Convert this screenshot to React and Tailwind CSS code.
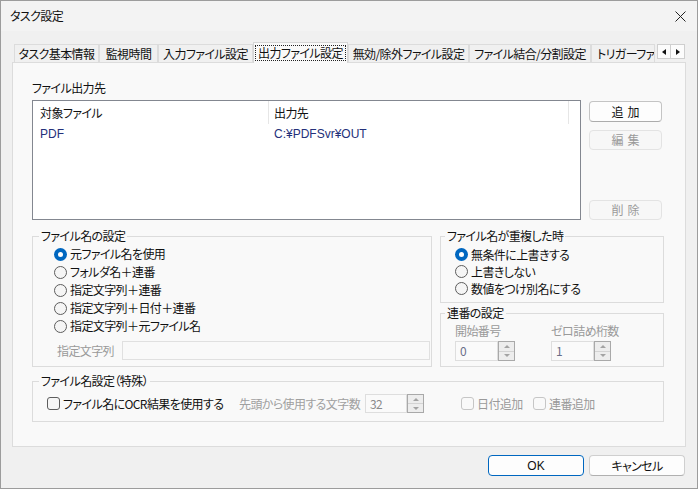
import React from "react";

function Radio({ checked, label, rowClass }) {
  return (
    <div className={"flex items-center " + rowClass}>
      {checked ? (
        <span className="w-[13px] h-[13px] rounded-full bg-[#0067c0] flex items-center justify-center shrink-0">
          <span className="w-[5px] h-[5px] rounded-full bg-white" />
        </span>
      ) : (
        <span className="w-[13px] h-[13px] rounded-full border border-[#5d5d5d] bg-[#f5f5f5] shrink-0" />
      )}
      <span className="ml-[3px] whitespace-nowrap">{label}</span>
    </div>
  );
}

function Check({ disabled }) {
  return (
    <span
      className={
        "w-[13px] h-[13px] rounded-[3px] border shrink-0 " +
        (disabled ? "border-[#c6c6c6] bg-[#f9f9f9]" : "border-[#5d5d5d] bg-[#f6f6f6]")
      }
    />
  );
}

function SpinButtons() {
  return (
    <div className="w-[17px] flex flex-col border border-[#a9a9a9] bg-[#ededed]">
      <div className="flex-1 flex items-center justify-center border-b border-[#d3d3d3]">
        <span className="w-0 h-0 border-l-[3px] border-r-[3px] border-b-[3px] border-l-transparent border-r-transparent border-b-[#a3a3a3]" />
      </div>
      <div className="flex-1 flex items-center justify-center">
        <span className="w-0 h-0 border-l-[3px] border-r-[3px] border-t-[3px] border-l-transparent border-r-transparent border-t-[#a3a3a3]" />
      </div>
    </div>
  );
}

function Spin({ value, widthClass }) {
  return (
    <div className={"flex h-[20px] " + widthClass}>
      <div className="flex-1 border border-[#dedede] bg-[#fafafa] pl-[4px] flex items-center text-[#6a6e88] leading-none">
        {value}
      </div>
      <SpinButtons />
    </div>
  );
}

function Tab({ label, widthClass, selected, left }) {
  if (selected) {
    return (
      <div
        className={
          "h-[21px] -mb-px border border-b-0 border-[#d6d6d6] bg-[#f9f9f9] flex items-center justify-center z-10 whitespace-nowrap " +
          widthClass
        }
      >
        <span className="border border-dotted border-[#222] px-[2px] leading-[14px] whitespace-nowrap">{label}</span>
      </div>
    );
  }
  return (
    <div
      className={
        "h-[18px] border border-b-0 border-[#dcdcdc] bg-[#f0f0f0] flex items-center overflow-hidden whitespace-nowrap " +
        (left ? "pl-[5px] " : "justify-center ") +
        widthClass
      }
    >
      {label}
    </div>
  );
}

export default function App() {
  return (
    <div className="w-[698px] h-[489px] border border-[#9c9c9c] bg-[#f0f0f0] flex flex-col text-[12px] tracking-[-0.6px] text-[#111] font-['Noto_Sans_CJK_JP',sans-serif] [font-feature-settings:'palt'] overflow-hidden">
      {/* Title bar */}
      <div className="h-[30px] bg-[#f3f3f3] flex items-center pl-[9px] pr-[11px] shrink-0">
        <span className="leading-[16px]">タスク設定</span>
        <svg className="ml-auto" width="11" height="11" viewBox="0 0 11 11">
          <path d="M0.5 0.5 L10.5 10.5 M10.5 0.5 L0.5 10.5" stroke="#222" strokeWidth="1" fill="none" />
        </svg>
      </div>

      {/* Tabs */}
      <div className="mt-[11px] ml-[13px] h-[20px] flex items-end leading-[16px] shrink-0">
        <Tab label="タスク基本情報" widthClass="w-[85px]" />
        <Tab label="監視時間" widthClass="w-[59px]" />
        <Tab label="入力ファイル設定" widthClass="w-[95px]" />
        <Tab label="出力ファイル設定" widthClass="w-[95px]" selected />
        <Tab label="無効/除外ファイル設定" widthClass="w-[121px]" />
        <Tab label="ファイル結合/分割設定" widthClass="w-[122px]" />
        <Tab label="トリガーファイル設定" widthClass="w-[64px]" left />
        <div className="self-start mt-[2px] ml-[2px] flex">
          <div className="w-[14px] h-[15px] border border-[#cfcfcf] bg-[#fcfcfc] flex items-center justify-center">
            <span className="w-0 h-0 border-t-[3px] border-b-[3px] border-r-[4px] border-t-transparent border-b-transparent border-r-[#111]" />
          </div>
          <div className="w-[14px] h-[15px] border border-l-0 border-[#cfcfcf] bg-[#fcfcfc] flex items-center justify-center">
            <span className="w-0 h-0 border-t-[3px] border-b-[3px] border-l-[4px] border-t-transparent border-b-transparent border-l-[#111]" />
          </div>
        </div>
      </div>

      {/* Panel */}
      <div className="ml-[11px] w-[674px] h-[385px] border border-[#dcdcdc] bg-[#f9f9f9] pl-[19px] pt-[17px] flex flex-col shrink-0 leading-[16px]">
        <div>ファイル出力先</div>

        {/* list + buttons */}
        <div className="mt-[4px] flex">
          <div className="w-[549px] h-[120px] border border-[#838790] bg-white flex flex-col">
            <div className="flex h-[24px] items-center">
              <div className="w-[235px] pl-[7px]">対象ファイル</div>
              <div className="w-px h-[23px] bg-[#e6e6e6] self-start" />
              <div className="w-[299px] pl-[5px]">出力先</div>
              <div className="w-px h-[23px] bg-[#e6e6e6] self-start" />
            </div>
            <div className="flex h-[18px] items-center text-[#24307a] tracking-normal font-['Liberation_Sans','Noto_Sans_CJK_JP',sans-serif]">
              <div className="w-[236px] pl-[7px]">PDF</div>
              <div className="pl-[5px]">C:¥PDFSvr¥OUT</div>
            </div>
          </div>
          <div className="ml-[8px] w-[73px] h-[120px] flex flex-col">
            <button className="mt-[1px] h-[21px] rounded-[4px] border border-[#c4c4c4] border-b-[#acacac] bg-[#fdfdfd] text-[#111] tracking-[4px] pl-[4px]">
              追加
            </button>
            <button className="mt-[8px] h-[20px] rounded-[4px] border border-[#e3e3e3] bg-[#f7f7f7] text-[#9a9a9a] tracking-[4px] pl-[4px]">
              編集
            </button>
            <button className="mt-auto h-[20px] rounded-[4px] border border-[#e3e3e3] bg-[#f7f7f7] text-[#9a9a9a] tracking-[4px] pl-[4px]">
              削除
            </button>
          </div>
        </div>

        {/* groups row */}
        <div className="mt-[8px] flex items-stretch">
          <fieldset className="w-[400px] border border-[#dcdcdc] pl-[21px] pt-[1px]">
            <legend className="-ml-[15px] px-[2px] leading-[16px]">ファイル名の設定</legend>
            <Radio checked label="元ファイル名を使用" rowClass="h-[18px]" />
            <Radio label="フォルダ名＋連番" rowClass="h-[18px]" />
            <Radio label="指定文字列＋連番" rowClass="h-[18px]" />
            <Radio label="指定文字列＋日付＋連番" rowClass="h-[18px]" />
            <Radio label="指定文字列＋元ファイル名" rowClass="h-[18px]" />
            <div className="mt-[6px] ml-[3px] flex items-center h-[19px]">
              <span className="w-[65px] text-[#9a9a9a]">指定文字列</span>
              <div className="w-[308px] h-[19px] border border-[#e0e0e0] bg-[#f9f9f9]" />
            </div>
          </fieldset>

          <div className="ml-[8px] w-[224px] flex flex-col">
            <fieldset className="border border-[#dcdcdc] pl-[14px] pt-[2px] pb-[5px]">
              <legend className="-ml-[10px] px-[2px] leading-[16px]">ファイル名が重複した時</legend>
              <Radio checked label="無条件に上書きする" rowClass="h-[17px]" />
              <Radio label="上書きしない" rowClass="h-[17px]" />
              <Radio label="数値をつけ別名にする" rowClass="h-[17px]" />
            </fieldset>
            <fieldset className="mt-[2px] border border-[#dcdcdc] pl-[14px] pt-[4px] pb-[5px]">
              <legend className="-ml-[10px] px-[2px] leading-[16px]">連番の設定</legend>
              <div className="flex -mt-[4px]">
                <div className="flex flex-col">
                  <span className="text-[#9a9a9a] h-[20px] flex items-center">開始番号</span>
                  <Spin value="0" widthClass="w-[60px]" />
                </div>
                <div className="flex flex-col ml-[36px]">
                  <span className="text-[#9a9a9a] h-[20px] flex items-center">ゼロ詰め桁数</span>
                  <Spin value="1" widthClass="w-[60px]" />
                </div>
              </div>
            </fieldset>
          </div>
        </div>

        {/* special */}
        <fieldset className="mt-[6px] w-[632px] border border-[#dcdcdc] pl-[14px] pt-[5px] pb-[8px]">
          <legend className="-ml-[8px] px-[2px] leading-[16px]">ファイル名設定（特殊）</legend>
          <div className="flex items-center h-[19px]">
            <div className="w-[192px] flex items-center">
              <Check />
              <span className="ml-[3px] whitespace-nowrap">ファイル名にOCR結果を使用する</span>
            </div>
            <span className="w-[126px] text-[#a0a0a0] whitespace-nowrap">先頭から使用する文字数</span>
            <div className="flex h-[19px] w-[59px]">
              <div className="flex-1 border border-[#dedede] bg-[#fafafa] pl-[4px] flex items-center text-[#8a8a8a] leading-none">
                32
              </div>
              <SpinButtons />
            </div>
            <div className="ml-[37px] w-[72px] flex items-center">
              <Check disabled />
              <span className="ml-[3px] text-[#9a9a9a] whitespace-nowrap">日付追加</span>
            </div>
            <div className="flex items-center">
              <Check disabled />
              <span className="ml-[3px] text-[#9a9a9a] whitespace-nowrap">連番追加</span>
            </div>
          </div>
        </fieldset>
      </div>

      {/* bottom buttons */}
      <div className="mt-[8px] flex justify-end pr-[12px] gap-[5px] shrink-0">
        <button className="w-[96px] h-[21px] rounded-[4px] border border-[#0067c0] bg-[#fdfdfd] text-[#111] leading-[16px] tracking-normal font-['Liberation_Sans','Noto_Sans_CJK_JP',sans-serif]">
          OK
        </button>
        <button className="w-[96px] h-[21px] rounded-[4px] border border-[#cfcfcf] border-b-[#b0b0b0] bg-[#fdfdfd] text-[#111] leading-[16px]">
          キャンセル
        </button>
      </div>
    </div>
  );
}
